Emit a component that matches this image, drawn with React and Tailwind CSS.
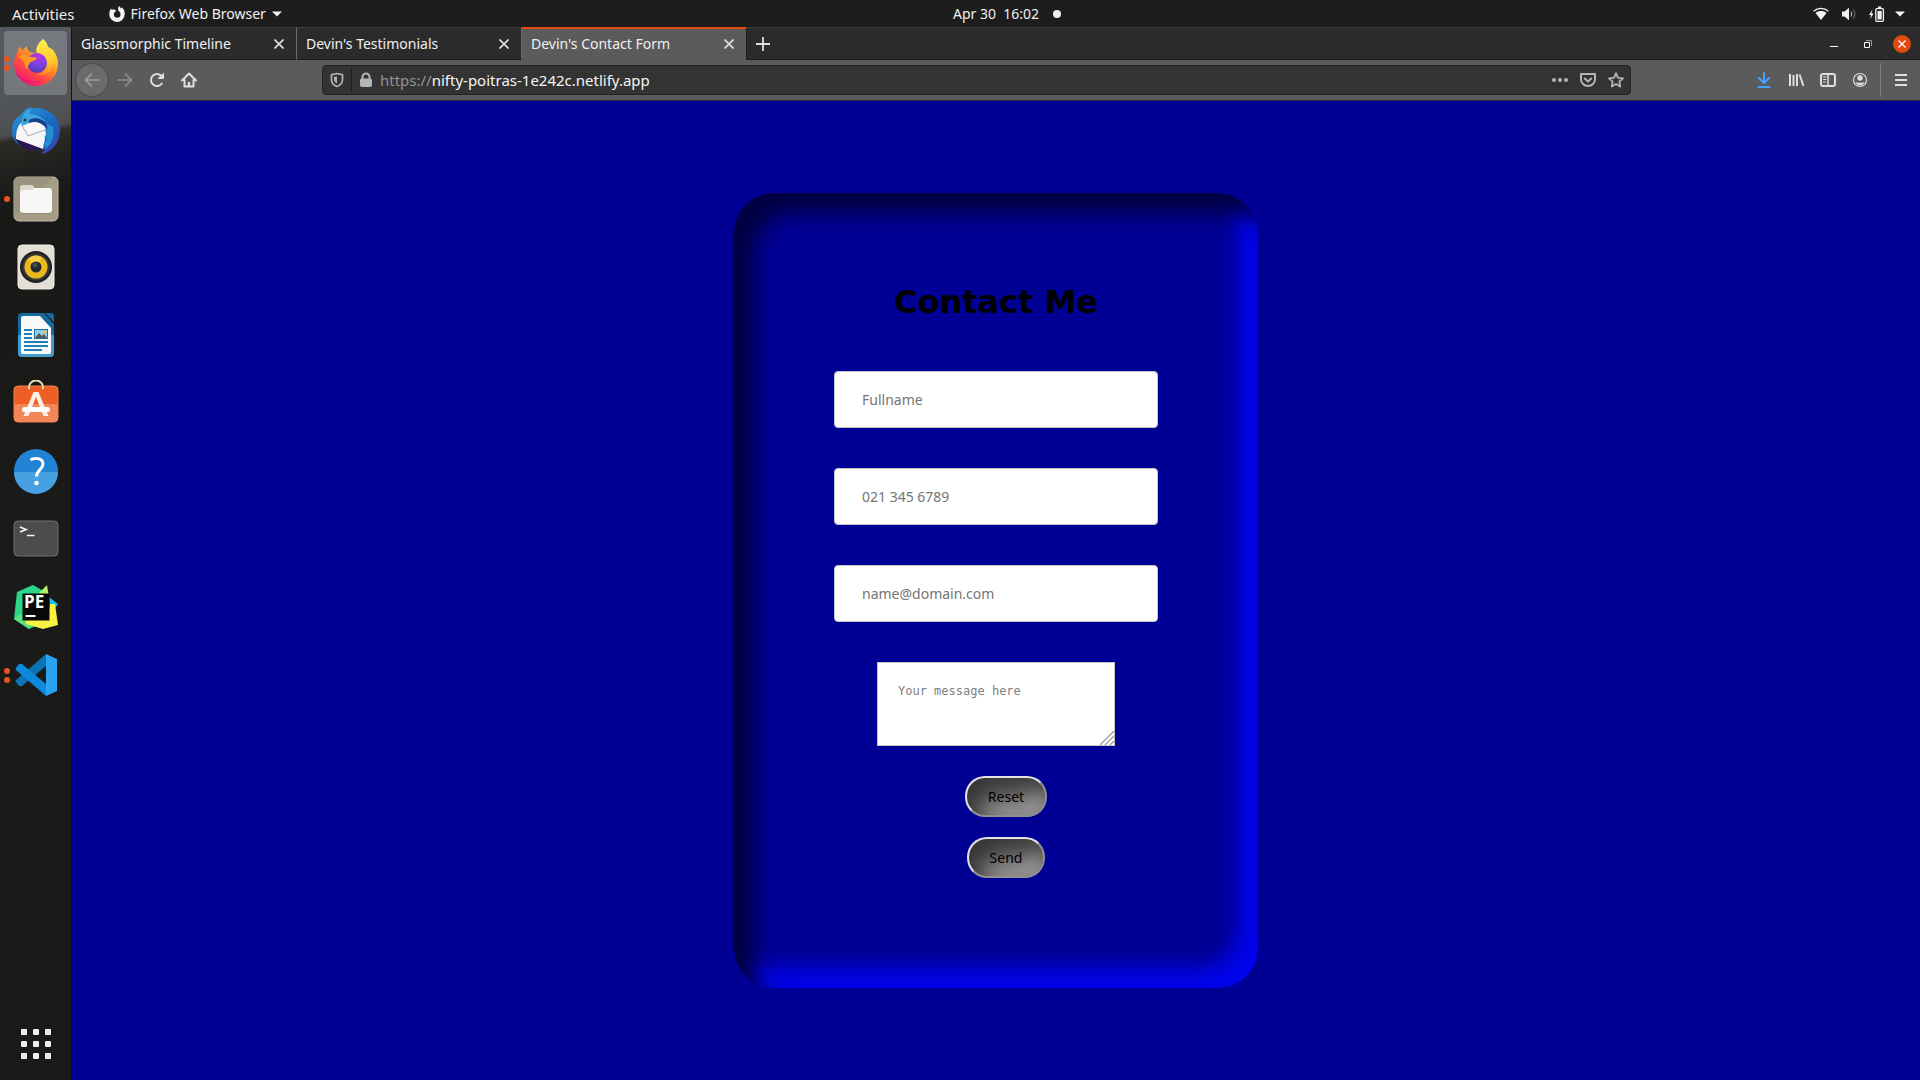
import React from "react";

const Caret = ({ className }) => (
  <svg className={className} viewBox="0 0 10 6" width="10" height="6"><path d="M0 .5h10L5 5.5z" fill="#f2f2f2" /></svg>
);

function TopBar() {
  return (
    <header className="grid h-[27px] shrink-0 grid-cols-[1fr_auto_1fr] items-center bg-[#1d1d1d] text-sm text-[#f0f0f0]">
      <div className="flex items-center">
        <button className="pl-3 text-[15px] leading-5">Activities</button>
        <button className="ml-[33px] flex items-center">
          <svg width="18" height="18" viewBox="0 0 18 18">
            <path fill="#f2f2f2" fillRule="evenodd" d="M11 1c1 .8 1.3 1.700 1.500 2.400.6-.1 1-.6 1.300-1.100C16 4 17 6.700 16.700 9.600A7.700 7.700 0 0 1 1.300 9C1.300 6.700 2 5 3 3.500l.9 1.300 1.900-.5L8.600 6c-.6.2-1.400.3-1.700 1-.7.500-1 1.200-1 2.200a3.300 3.300 0 0 0 6.600.2c0-1.700-.8-2.700-1.900-3.300-.8-1.400-.5-3.500.4-5.100z" />
          </svg>
          <span className="ml-[5px]">Firefox Web Browser</span>
          <Caret className="ml-[6px]" />
        </button>
      </div>
      <button className="relative ml-[72px]">
        Apr 30&nbsp; 16:02
        <span className="absolute -right-[22px] top-1/2 h-2 w-2 -translate-y-1/2 rounded-full bg-[#f0f0f0]" />
      </button>
      <button className="flex items-center justify-end gap-3 pr-[15px]" aria-label="System menu">
        <svg width="16" height="14" viewBox="0 0 16 14">
          <path d="M.6 4.300C4.800.5 11.200.5 15.400 4.300" fill="none" stroke="#f2f2f2" strokeWidth="1.300" />
          <path d="M2.500 5.900c3.200-2.600 7.800-2.600 11 0L8 13z" fill="#f2f2f2" />
        </svg>
        <svg width="16" height="14" viewBox="0 0 16 14" fill="none">
          <path d="M1 4.500h2.500L8 .8v12.400L3.500 9.500H1z" fill="#f2f2f2" />
          <path d="M10 4.500q1.600 2.500 0 5" stroke="#ccc" /><path d="M12.500 2.500q3 4.500 0 9" stroke="#777" />
        </svg>
        <svg width="16" height="16" viewBox="0 0 16 16">
          <path d="M3.500 3.500 0 9h2l-.7 4L4.500 7.500h-2z" fill="#f2f2f2" />
          <rect x="6.800" y="2.700" width="7.600" height="12.600" rx="1" fill="none" stroke="#f2f2f2" strokeWidth="1.300" />
          <path d="M9 .5h3.200v2H9zM8.500 5h4.200v8.500H8.500z" fill="#f2f2f2" />
        </svg>
        <Caret className="-ml-0.5" />
      </button>
    </header>
  );
}

const FirefoxIcon = () => (
  <svg width="46" height="48" viewBox="0 1 46 48">
    <defs>
      <linearGradient id="ffBody" x1=".85" y1=".1" x2=".25" y2="1"><stop offset="0" stopColor="#fff44f" /><stop offset=".35" stopColor="#ffa51f" /><stop offset=".65" stopColor="#ff4f3f" /><stop offset="1" stopColor="#f0107a" /></linearGradient>
      <radialGradient id="ffGlobe" cx=".6" cy=".15" r=".9"><stop offset="0" stopColor="#b833e1" /><stop offset=".5" stopColor="#8040e8" /><stop offset="1" stopColor="#4a3fa8" /></radialGradient>
      <linearGradient id="ffTail" x1=".5" y1="0" x2=".5" y2="1"><stop offset="0" stopColor="#fff152" /><stop offset=".6" stopColor="#ffc92e" /><stop offset="1" stopColor="#ff8a1f" /></linearGradient>
    </defs>
    <path d="M30 1c2 2 4 4 5 8 2 1 4 2 5 3 3 4 5 8 5 14a22 22 0 0 1-44 0C1 20 3 16 5 13c0-2 1-4 2-4 1 2 2 3 3 3 1-2 3-3 4-4 0 3 1 5 3 6l8 2z" fill="url(#ffBody)" />
    <path d="M2 33c7 11 21 12 30 8-8 5-24 5-28-4z" fill="#e4117d" opacity=".7" />
    <path d="M30 1c-6 5-8 10-6 15 5 2 9 5 9 11-1 7-5 9-9 10 12 1 20-8 17-19 1 2 2 3 2 4 0-5-3-10-8-13-1-4-3-6-5-8z" fill="url(#ffTail)" />
    <circle cx="24" cy="25" r="10" fill="url(#ffGlobe)" />
    <path d="M5 19c4-3 8-3 12 0 3 0 6 0 7 1-1 3-6 3-7 5-3 3-2 6-3 6-3-3-1-9-9-12z" fill="#ff9a1e" />
  </svg>
);

const ThunderbirdIcon = () => (
  <svg width="50" height="50" viewBox="0 0 50 50">
    <defs><linearGradient id="tb" x1=".2" y1="0" x2=".9" y2="1"><stop offset="0" stopColor="#2b92d8" /><stop offset=".5" stopColor="#1c66c0" /><stop offset="1" stopColor="#3c3fa8" /></linearGradient></defs>
    <path d="M18 3c13-4 31 4 31 21 0 12-7 22-19 24l4-5C20 45 3 42 1 27 0 18 4 12 10 9c2-4 5-7 11-8z" fill="url(#tb)" />
    <path d="M4 31l28 12c-6 2-11 1-15-1l4 3C12 43 6 38 4 31z" fill="#2a1552" />
    <path d="M10 17c7-2 19-2 24 1l1 10-3 15L5 33c0-6 1-12 5-16z" fill="#f7f7f9" />
    <path d="M10 18l7 12 17-6" fill="none" stroke="#aaa" strokeWidth="1" />
    <path d="M11 20c-2-9 3-17 11-18-3 2-4 4-4 6 7 0 14 3 18 10-7-4-14-3-20 0z" fill="#38a5df" />
    <path d="M18 14c6-3 13-2 18 4l-1 4c-5-6-11-7-17-5z" fill="#143e8a" />
    <path d="M35 17l2 5-3 3 2 2-3 5 3 1-4 6 3 1-2 4c8-5 11-14 9-23z" fill="#1e8fd0" />
    <circle cx="14" cy="14" r="1.500" fill="#333" />
  </svg>
);

const FilesIcon = () => (
  <svg width="46" height="46" viewBox="0 0 46 46">
    <rect x="1" y="1" width="44" height="44" rx="5" fill="#a69d87" stroke="#c3bba8" />
    <path d="M1 40V6q0-5 5-5h34z" fill="#978e79" opacity=".7" />
    <path d="M7 30V12q0-3 3-3h8q2 0 3 2l1 2h14v10z" fill="#dedacd" />
    <rect x="7" y="14" width="32" height="24" rx="3" fill="#7c745f" opacity=".5" />
    <path d="M7 16q0-2 3-2h9l3-2h14q3 0 3 3v19q0 3-3 3H10q-3 0-3-3z" fill="#f7f7f6" />
  </svg>
);

const MusicIcon = () => (
  <svg width="46" height="46" viewBox="0 0 46 46">
    <rect x="5" y="1" width="36" height="44" rx="4" fill="#e3dfd4" stroke="#efece5" />
    <circle cx="23" cy="23" r="16" fill="#1f2229" /><circle cx="23" cy="23" r="13.500" fill="#3c3a36" /><circle cx="23" cy="23" r="11.500" fill="#e9b91d" />
    <path d="M15 15a11.500 11.500 0 0 1 14-2l-6 10z" fill="#f9dc57" opacity=".7" />
    <circle cx="23" cy="23" r="5.500" fill="#25282c" /><circle cx="22" cy="21" r="2.500" fill="#484b50" />
  </svg>
);

const WriterIcon = () => (
  <svg width="46" height="46" viewBox="0 0 46 46">
    <path d="M9 1h22l10 11v29q0 4-4 4H9q-4 0-4-4V5q0-4 4-4z" fill="#14699f" />
    <path d="M5 23h36v18q0 4-4 4H9q-4 0-4-4z" fill="#439ccb" />
    <path d="M32 1h6q3 0 3 3v6z" fill="#146ba2" />
    <path d="M10 4h17l11 12v24q0 2-2 2H10q-2 0-2-2V6q0-2 2-2z" fill="#fafafa" />
    <path d="M11 18h8M11 22h8M11 26h8M11 30h24M11 34h24M11 38h18" stroke="#1d81b7" strokeWidth="1.800" />
    <rect x="21.500" y="17.500" width="13" height="9" fill="#94cdea" stroke="#1972a4" />
    <path d="M22 26l4-5 3 3 2-2 3 4z" fill="#5a5852" /><circle cx="32" cy="20" r="1.500" fill="#efc62e" />
  </svg>
);

const SoftwareIcon = () => (
  <svg width="46" height="46" viewBox="0 1 46 46">
    <rect x="1" y="7" width="44" height="36" rx="4" fill="#ee5f26" stroke="#f48255" /><path d="M1 25h44v14q0 4-4 4H5q-4 0-4-4z" fill="#f38658" />
    <path d="M16 10V8a7 6.500 0 0 1 14 0v2" fill="none" stroke="#e8dcb5" strokeWidth="2" />
    <path d="M20.500 13h5l10 24h-5l-7.500-19L15.500 37h-5z" fill="#fbeee6" />
    <rect x="9" y="28" width="28" height="5" rx="2.500" fill="#fff" />
  </svg>
);

const HelpIcon = () => (
  <svg width="46" height="46" viewBox="0 0 46 46">
    <circle cx="23" cy="23" r="22" fill="#2083d3" /><path d="M1 24a22 22 0 0 0 44 0z" fill="#46a0e2" />
    <path d="M17.500 12c3-2.500 12.500-2.500 12.500 4 0 5.500-6.500 6-6.500 12.500" fill="none" stroke="#fff" strokeWidth="3" /><circle cx="23.500" cy="35" r="2.300" fill="#fff" />
  </svg>
);

const TerminalIcon = () => (
  <svg width="46" height="46" viewBox="0 0 46 46">
    <rect x="1" y="5" width="44" height="35" rx="4" fill="#4c4c4c" stroke="#707070" />
    <path d="M7 11l6 2.500L7 16M14 19.500h7.500" fill="none" stroke="#f4f4f4" strokeWidth="1.700" />
  </svg>
);

const PyCharmIcon = () => (
  <svg width="46" height="46" viewBox="0 0 46 46">
    <path d="M4 8L20 1l14 8-4 30-14 6L1 35z" fill="#2cd78b" /><path d="M1 35l6-5 14 8-5 7z" fill="#59e27b" />
    <path d="M26 9l8-8 2 13z" fill="#b8f06c" /><path d="M36 13l9 7-8 12z" fill="#12bfee" />
    <path d="M37 20h5l3 21-15 4-17-5V32h22z" fill="#f8f244" />
    <rect x="9.500" y="9.500" width="27" height="27" fill="#090909" />
    <text x="11" y="24" fill="#fff" fontFamily="Open Sans, sans-serif" fontWeight="700" fontSize="17">PE</text>
    <path d="M12.500 32h10" stroke="#fff" strokeWidth="2" />
  </svg>
);

const CodeIcon = () => (
  <svg width="46" height="46" viewBox="0 0 46 46">
    <path d="M33 2v12L9 34q-2 1-4-1l-2-3q-1-1 0-2z" fill="#0b72b5" />
    <path d="M33 44V32L9 12q-2-1-4 1l-2 3q-1 1 0 2z" fill="#0c89d8" />
    <path d="M33 2l11 5v32l-11 5z" fill="#27a4f2" />
  </svg>
);

const apps = [
  { name: "Thunderbird Mail", Icon: ThunderbirdIcon, dots: 0 },
  { name: "Files", Icon: FilesIcon, dots: 1 },
  { name: "Rhythmbox", Icon: MusicIcon, dots: 0 },
  { name: "LibreOffice Writer", Icon: WriterIcon, dots: 0 },
  { name: "Ubuntu Software", Icon: SoftwareIcon, dots: 0 },
  { name: "Help", Icon: HelpIcon, dots: 0 },
  { name: "Terminal", Icon: TerminalIcon, dots: 0 },
  { name: "PyCharm", Icon: PyCharmIcon, dots: 0 },
  { name: "Visual Studio Code", Icon: CodeIcon, dots: 2 },
];

function DockItem({ name, Icon, dots, active }) {
  return (
    <button aria-label={name} className="relative flex h-[68px] w-full items-center justify-center">
      {active && <span className="absolute inset-x-1 inset-y-0.5 rounded bg-white/20" />}
      <span className="absolute left-1 flex flex-col gap-[3px]">
        {Array.from({ length: dots }, (_, i) => <i key={i} className="h-1.5 w-1.5 rounded-full bg-[#e95420]" />)}
      </span>
      <span className="relative"><Icon /></span>
    </button>
  );
}

function Dock() {
  return (
    <nav className="flex w-[72px] shrink-0 flex-col border-r border-[#111] bg-[linear-gradient(168deg,#555a62_0px,#515356_90px,#4b4c4d_108px,#2a2c26_114px,#20211e_145px,#181817_180px,#1a1a19_500px,#1a1a19_100%)] pt-0.5">
      <DockItem name="Firefox" Icon={FirefoxIcon} dots={2} active />
      {apps.map((a) => <DockItem key={a.name} {...a} />)}
      <button aria-label="Show Applications" className="mb-[21px] mt-auto grid grid-cols-[6px_6px_6px] gap-1.5 self-center">
        {Array.from({ length: 9 }, (_, i) => <i key={i} className="h-1.5 rounded-[1px] bg-[#eeeeec]" />)}
      </button>
    </nav>
  );
}

function Tab({ title, active }) {
  return (
    <div className={active
      ? "flex w-[225px] items-center border-r border-t-2 border-r-[#1b1b1b] border-t-[#e2490f] bg-[#5b5b5b] pb-0.5"
      : "flex w-[225px] items-center border-b border-r border-t border-b-[#1b1b1b] border-r-[#6b6b6b] border-t-[#3d3d3d]"}>
      <button className="flex-1 pl-[9px] text-left">{title}</button>
      <button aria-label={"Close " + title} className="mr-3">
        <svg width="10" height="10" viewBox="0 0 10 10"><path d="M.5.5l9 9M9.500.5l-9 9" stroke="#ddd" strokeWidth="1.700" /></svg>
      </button>
    </div>
  );
}

function TabBar() {
  return (
    <div className="flex h-[33px] shrink-0 bg-[#2b2b2b] text-sm text-[#f0f0f0]">
      <Tab title="Glassmorphic Timeline" />
      <Tab title="Devin's Testimonials" />
      <Tab title="Devin's Contact Form" active />
      <div className="flex flex-1 items-center border-b border-t border-b-[#1b1b1b] border-t-[#3d3d3d]">
        <button aria-label="New tab" className="ml-[9px]">
          <svg width="14" height="14" viewBox="0 0 14 14"><path d="M7 0v14M0 7h14" stroke="#ddd" strokeWidth="1.800" /></svg>
        </button>
        <div className="ml-auto mr-[9px] flex items-center gap-6">
          <button aria-label="Minimize"><svg width="10" height="10" viewBox="0 0 10 10"><path d="M1 7.500h8" stroke="#fff" /></svg></button>
          <button aria-label="Restore">
            <svg width="10" height="10" viewBox="0 0 10 10" fill="none"><path d="M3 1.500h5.500V7" stroke="#999" /><path d="M1.500 3.500h5v5h-5z" stroke="#fff" /></svg>
          </button>
          <button aria-label="Close window" className="-ml-1 flex h-[18px] w-[18px] items-center justify-center rounded-full bg-[#e2490f]">
            <svg width="8" height="8" viewBox="0 0 8 8"><path d="M.5.5l7 7M7.500.5l-7 7" stroke="#fff" strokeWidth="1.300" /></svg>
          </button>
        </div>
      </div>
    </div>
  );
}

const Glyph = ({ label, children, className = "text-[#dedede]" }) => (
  <button aria-label={label} className={className}>
    <svg width="16" height="16" viewBox="0 0 16 16" fill="none" stroke="currentColor" strokeWidth="2" strokeLinecap="round" strokeLinejoin="round">{children}</svg>
  </button>
);

function NavBar() {
  return (
    <div className="flex h-[41px] shrink-0 items-center border-b border-[#2b2b2b] bg-[#5b5b5b]">
      <div className="flex w-[250px] items-center gap-4 pl-1">
        <span className="-mr-[7px] flex h-8 w-8 items-center justify-center rounded-full bg-[#6a6a6a] ring-1 ring-[#4b4b4b]">
          <Glyph label="Back" className="text-[#9d9d9d]"><path d="M15 8H1.500M7.500 2l-6 6 6 6" strokeWidth="1.700" /></Glyph>
        </span>
        <Glyph label="Forward" className="text-[#909090]"><path d="M1 8h13.500M8.500 2l6 6-6 6" strokeWidth="1.700" /></Glyph>
        <Glyph label="Reload"><path d="M12.800 11.500A6 6 0 1 1 12.500 4" /><path d="M14.500 1.500v5h-5z" fill="currentColor" strokeWidth="1" /></Glyph>
        <Glyph label="Home"><path d="M1 8.500L8 1.500l7 7M3.500 8v6.500h9V8" /><path d="M8 14v-4" strokeWidth="2.500" strokeLinecap="butt" /></Glyph>
      </div>
      <div className="flex h-[30px] flex-1 items-center rounded border border-[#222] bg-[#333] text-[#b1b1b1]">
        <div className="flex h-[22px] w-[29px] items-center justify-center border-r border-[#1d1d1d]">
          <Glyph label="Tracking protection" className="text-[#b5b5b5]"><path d="M8 1.500c2 .8 4 1 5.500 1v5c0 3.500-2.500 6-5.500 7-3-1-5.500-3.500-5.500-7v-5c1.500 0 3.500-.2 5.500-1z" strokeWidth="1.700" /><path d="M8 4.500v7c-2-1-3-2.500-3-4.500V5z" fill="currentColor" stroke="none" /></Glyph>
        </div>
        <Glyph label="Connection secure" className="mx-1.5 text-[#b5b5b5]"><rect x="2.500" y="7" width="11" height="7.500" rx="1" fill="currentColor" strokeWidth="1" /><path d="M4.500 7V5a3.500 3.500 0 0 1 7 0v2" /></Glyph>
        <div className="flex-1 text-[15px] leading-5 text-[#949494]">https://<span className="text-[#f5f5f5]">nifty-poitras-1e242c.netlify.app</span></div>
        <div className="mr-1.5 flex gap-3">
          <Glyph label="Page actions" className="text-[#b5b5b5]"><g fill="currentColor" stroke="none"><circle cx="2" cy="8" r="2" /><circle cx="8" cy="8" r="2" /><circle cx="14" cy="8" r="2" /></g></Glyph>
          <Glyph label="Save to Pocket" className="text-[#b5b5b5]"><path d="M1 2h14v5.500a7 6.500 0 0 1-14 0z" /><path d="M4.800 6.500L8 9.500l3.200-3" /></Glyph>
          <Glyph label="Bookmark" className="text-[#b5b5b5]"><path d="M8 1.200l2 4.600 5 .5-3.700 3.300 1 5L8 12l-4.300 2.600 1-5L1 6.300l5-.5z" strokeWidth="1.800" /></Glyph>
        </div>
      </div>
      <div className="flex items-center gap-4 pl-[125px] pr-[11px]">
        <Glyph label="Downloads" className="text-[#45a1ff]"><path d="M8 1v9.500M3 6l5 5 5-5M2.500 15h11" /></Glyph>
        <Glyph label="Library"><path d="M2 2v12M5.500 3v11M9 2v12M11.500 2.500l4 11.500" strokeLinecap="butt" /></Glyph>
        <Glyph label="Sidebars"><rect x="1" y="2" width="14" height="12" rx="2" /><path d="M8 2v12" strokeWidth="1.500" /><path d="M3.500 5h2.500M3.500 7.500h2.500M3.500 10h2" strokeWidth="1" /></Glyph>
        <Glyph label="Account"><circle cx="8" cy="8" r="6.500" strokeWidth="1.200" /><circle cx="8" cy="6" r="2.700" fill="currentColor" stroke="none" /><path d="M3.500 10c2 1 7 1 9 0-1 2.500-2.500 3.500-4.500 3.500S4.500 12.500 3.500 10z" fill="currentColor" stroke="none" /></Glyph>
        <span className="-mx-1 h-[34px] w-px bg-[#7c7c7c]" />
        <Glyph label="Menu"><path d="M2 3h12M2 8h12M2 13h12" strokeLinecap="butt" /></Glyph>
      </div>
    </div>
  );
}

const fields = [
  { label: "Full name", type: "text", placeholder: "Fullname" },
  { label: "Phone", type: "tel", placeholder: "021 345 6789" },
  { label: "Email", type: "email", placeholder: "name@domain.com" },
];

const buttonClass = "ml-5 h-[41px] rounded-[20px] border-2 border-b-[#8f8f8f] border-l-[#e3e3e3] border-r-[#8f8f8f] border-t-[#e3e3e3] bg-[#6c6a6a] px-[21px] text-sm text-black shadow-[inset_12px_12px_24px_#333333,inset_-12px_-12px_24px_#a5a1a1]";

function ContactForm() {
  return (
    <main className="flex flex-1 items-center justify-center bg-[#000094]">
      <form className="flex w-[524px] flex-col items-center rounded-[40px] pb-[110px] pt-[90px] shadow-[inset_20px_20px_20px_#000042,inset_-20px_-20px_20px_#0004ea]">
        <h1 className="mb-[50px] font-['DejaVu_Sans'] text-[32px] font-bold leading-[38px] text-black">Contact Me</h1>
        {fields.map((f) => (
          <input key={f.label} aria-label={f.label} type={f.type} placeholder={f.placeholder}
            className="mb-10 h-[57px] w-[324px] rounded border border-[#c4c4c4] bg-white px-[27px] text-sm text-black placeholder:text-[#757575]" />
        ))}
        <div className="relative mb-[30px] flex">
          <textarea aria-label="Message" placeholder="Your message here"
            className="h-[84px] w-[238px] resize-none border border-[#c4c4b8] bg-white p-5 font-['DejaVu_Sans_Mono'] text-xs leading-4 text-black placeholder:text-[#808080]" />
          <svg className="pointer-events-none absolute bottom-px right-px" width="14" height="14" viewBox="0 0 14 14">
            <path d="M0 14L14 0M5 14l9-9M10 14l4-4" stroke="#999" strokeWidth="1.300" />
          </svg>
        </div>
        <button type="reset" className={buttonClass + " mb-5"}>Reset</button>
        <button type="submit" className={buttonClass}>Send</button>
      </form>
    </main>
  );
}

export default function App() {
  return (
    <div className="flex min-h-screen flex-col bg-[#1d1d1d] font-['Noto_Sans',sans-serif]">
      <TopBar />
      <div className="flex flex-1">
        <Dock />
        <div className="flex min-w-0 flex-1 flex-col">
          <TabBar />
          <NavBar />
          <ContactForm />
        </div>
      </div>
    </div>
  );
}
